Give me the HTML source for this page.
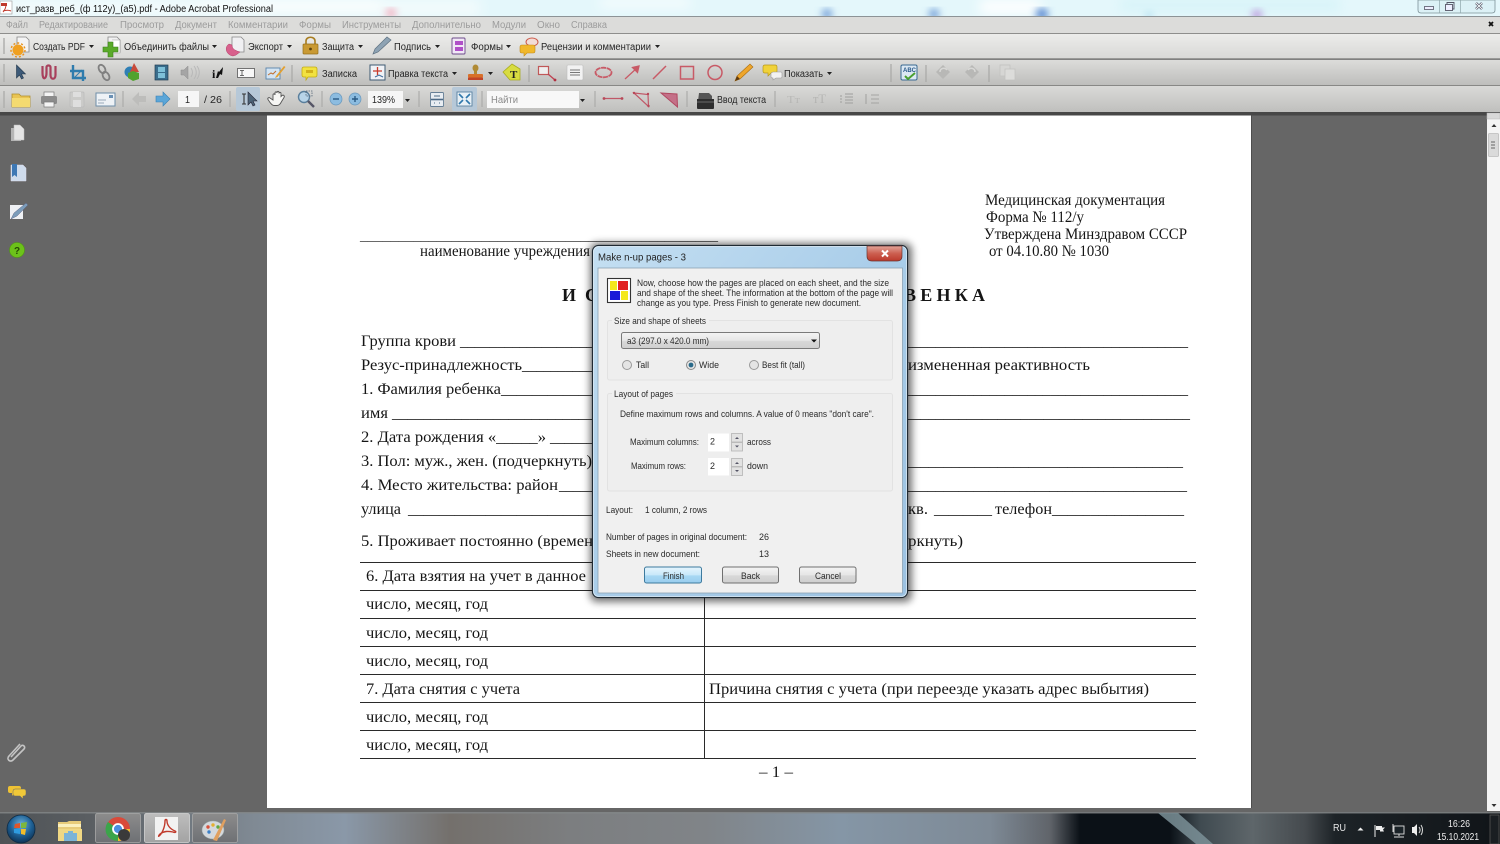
<!DOCTYPE html>
<html><head><meta charset="utf-8"><title>Adobe Acrobat</title>
<style>
html,body{margin:0;padding:0;width:1500px;height:844px;overflow:hidden;background:#666}
svg{display:block;filter:blur(.35px)}
text{font-family:"Liberation Sans","DejaVu Sans",sans-serif;font-size:10px;fill:#252525;white-space:pre}
.d text{font-family:"Liberation Serif","DejaVu Serif",serif;font-size:16px;fill:#151515}
.m text{fill:#9c9c9c}
.t text{font-size:9.5px;fill:#2a2a2a}
</style></head><body>
<svg width="1500" height="844" viewBox="0 0 1500 844" xmlns="http://www.w3.org/2000/svg">
<defs>
<linearGradient id="tb1" x1="0" y1="0" x2="0" y2="1"><stop offset="0" stop-color="#ececea"/><stop offset="1" stop-color="#d9d9d7"/></linearGradient>
<linearGradient id="tb2" x1="0" y1="0" x2="0" y2="1"><stop offset="0" stop-color="#dcdcda"/><stop offset="1" stop-color="#bebebc"/></linearGradient>
<linearGradient id="tb3" x1="0" y1="0" x2="0" y2="1"><stop offset="0" stop-color="#dadad8"/><stop offset="1" stop-color="#bfbfbd"/></linearGradient>
<linearGradient id="glass" x1="0" y1="0" x2="1" y2="1"><stop offset="0" stop-color="#c4dff2"/><stop offset=".5" stop-color="#a9cde9"/><stop offset="1" stop-color="#9cc2e2"/></linearGradient>
<linearGradient id="btn" x1="0" y1="0" x2="0" y2="1"><stop offset="0" stop-color="#f4f4f4"/><stop offset=".5" stop-color="#e6e6e6"/><stop offset=".55" stop-color="#d8d8d8"/><stop offset="1" stop-color="#cfcfcf"/></linearGradient>
<linearGradient id="btnb" x1="0" y1="0" x2="0" y2="1"><stop offset="0" stop-color="#e6f5fd"/><stop offset=".5" stop-color="#c8e8fa"/><stop offset=".55" stop-color="#a8d8f4"/><stop offset="1" stop-color="#98cdee"/></linearGradient>
<linearGradient id="close" x1="0" y1="0" x2="0" y2="1"><stop offset="0" stop-color="#e2a59a"/><stop offset=".5" stop-color="#cc5f50"/><stop offset="1" stop-color="#bb3a2c"/></linearGradient>
<linearGradient id="bar" x1="0" y1="0" x2="1" y2="0">
<stop offset="0" stop-color="#4f5356"/><stop offset=".06" stop-color="#5a5e62"/><stop offset=".17" stop-color="#808a94"/><stop offset=".23" stop-color="#8a98a8"/><stop offset=".3" stop-color="#74706c"/><stop offset=".38" stop-color="#7c7e80"/><stop offset=".47" stop-color="#808488"/><stop offset=".56" stop-color="#8596a6"/><stop offset=".66" stop-color="#7e8a96"/><stop offset=".7" stop-color="#60646a"/><stop offset=".72" stop-color="#0b1117"/><stop offset=".78" stop-color="#0b1117"/><stop offset=".8" stop-color="#3f4a50"/><stop offset=".835" stop-color="#5e666a"/><stop offset=".87" stop-color="#454a4e"/><stop offset=".89" stop-color="#1d2327"/><stop offset="1" stop-color="#101418"/></linearGradient>
<linearGradient id="acr" x1="0" y1="0" x2="0" y2="1"><stop offset="0" stop-color="#bdbdbd"/><stop offset="1" stop-color="#a3a3a3"/></linearGradient>
<linearGradient id="acr2" x1="0" y1="0" x2="0" y2="1"><stop offset="0" stop-color="#8c8c8c"/><stop offset="1" stop-color="#6e7074"/></linearGradient>
<radialGradient id="orb" cx=".5" cy=".35" r=".7"><stop offset="0" stop-color="#6fb2dc"/><stop offset=".55" stop-color="#1d5f93"/><stop offset="1" stop-color="#0c2b4a"/></radialGradient>
<filter id="b1"><feGaussianBlur stdDeviation="4"/></filter>
<filter id="b2"><feGaussianBlur stdDeviation="6"/></filter>
</defs>

<!-- background -->
<rect width="1500" height="844" fill="#666"/>

<!-- title bar -->
<rect width="1500" height="16" fill="#e4f7fb"/>
<g filter="url(#b2)">
<rect x="0" y="0" width="480" height="16" fill="#f3fbfc"/>
<rect x="200" y="0" width="180" height="8" fill="#fff"/>
<rect x="600" y="0" width="90" height="6" fill="#fff"/>
<rect x="980" y="0" width="60" height="14" fill="#fff"/>
<rect x="1120" y="0" width="220" height="10" fill="#d4f3f8"/>
</g>
<g filter="url(#b1)" fill-opacity=".95">
<circle cx="391" cy="13" r="5" fill="#f2a7b8"/>
<circle cx="827" cy="14" r="5" fill="#5e8ed2"/>
<circle cx="934" cy="14" r="5" fill="#5e8ed2"/>
<circle cx="1042" cy="14" r="6" fill="#4d80cc"/>
<circle cx="1257" cy="15" r="5" fill="#b58bd8"/>
<circle cx="1149" cy="16" r="3" fill="#8ccbe8"/>
</g>
<!-- pdf icon -->
<rect x="0" y="1" width="12" height="13" fill="#fff" stroke="#999" stroke-width=".6"/>
<path d="M1 3h6v3H1z" fill="#c0392b"/>
<path d="M3 12c2-2 3-5 3-8M3 11c3-1 6-1 8 0" stroke="#c0392b" fill="none" stroke-width="1"/>
<text x="16" y="12" textLength="257" lengthAdjust="spacingAndGlyphs" style="fill:#111">ист_разв_реб_(ф 112у)_(а5).pdf - Adobe Acrobat Professional</text>
<!-- window buttons -->
<path d="M1418 0v10q0 3 3 3h71q3 0 3-3V0z" fill="#dcf1f6" stroke="#7d9298" stroke-width=".8"/>
<path d="M1439.500 0v13M1460.500 0v13" stroke="#8ea5ab" stroke-width=".7"/>
<rect x="1424.500" y="6.500" width="9" height="3" fill="#eef" stroke="#556" stroke-width=".8"/>
<rect x="1445.500" y="4.500" width="7" height="6" fill="#eef" stroke="#556" stroke-width=".9"/><path d="M1447 4V2.500h7V9h-1.500" fill="none" stroke="#556" stroke-width=".9"/>
<path d="M1476 3l6 6M1482 3l-6 6" stroke="#556" stroke-width="2.400"/><path d="M1476 3l6 6M1482 3l-6 6" stroke="#f4f9fa" stroke-width="1"/>

<!-- menu bar -->
<rect y="16" width="1500" height="17" fill="#dcdcda"/>
<rect y="16" width="1500" height="1" fill="#8d9396"/>
<rect y="33" width="1500" height="1.500" fill="#8e8e8c"/>
<g class="m">
<text x="6" y="28" textLength="22" lengthAdjust="spacingAndGlyphs">Файл</text>
<text x="39" y="28" textLength="69" lengthAdjust="spacingAndGlyphs">Редактирование</text>
<text x="120" y="28" textLength="44" lengthAdjust="spacingAndGlyphs">Просмотр</text>
<text x="175" y="28" textLength="42" lengthAdjust="spacingAndGlyphs">Документ</text>
<text x="228" y="28" textLength="60" lengthAdjust="spacingAndGlyphs">Комментарии</text>
<text x="299" y="28" textLength="32" lengthAdjust="spacingAndGlyphs">Формы</text>
<text x="342" y="28" textLength="59" lengthAdjust="spacingAndGlyphs">Инструменты</text>
<text x="412" y="28" textLength="69" lengthAdjust="spacingAndGlyphs">Дополнительно</text>
<text x="492" y="28" textLength="34" lengthAdjust="spacingAndGlyphs">Модули</text>
<text x="537" y="28" textLength="23" lengthAdjust="spacingAndGlyphs">Окно</text>
<text x="571" y="28" textLength="36" lengthAdjust="spacingAndGlyphs">Справка</text>
</g>
<path d="M1489 22l4 4M1493 22l-4 4" stroke="#111" stroke-width="1.800"/>

<!-- toolbars -->
<rect y="34" width="1500" height="24" fill="url(#tb1)"/>
<rect y="58" width="1500" height="1.500" fill="#9a9a98"/>
<rect y="60" width="1500" height="25" fill="url(#tb2)"/>
<rect y="85" width="1500" height="1.500" fill="#888886"/>
<rect y="86" width="1500" height="26" fill="url(#tb3)"/>
<rect y="112" width="1500" height="3.500" fill="#474747"/>

<!-- Toolbar 1 -->
<g>
<path d="M4 38v16M4 64v18M4 91v17" stroke="#b0b0ae" stroke-width="1.500"/>
<path d="M17 37h9l3 3v12H17z" fill="#f4f4f4" stroke="#888" stroke-width=".8"/>
<circle cx="18" cy="50" r="5.500" fill="#f0a020"/><circle cx="18" cy="50" r="7" fill="none" stroke="#e89018" stroke-width="1.400" stroke-dasharray="2 2"/>
<text x="33" y="50" textLength="52" lengthAdjust="spacingAndGlyphs">Создать PDF</text>
<path d="M89 45h5l-2.500 3z" fill="#222"/>
<path d="M108 37h9l3 3v12h-12z" fill="#f2f2f2" stroke="#888" stroke-width=".8"/><path d="M112 40h8v13h-6" fill="#fff" stroke="#999" stroke-width=".6"/>
<path d="M108 42h5v5h5v5h-5v5h-5v-5h-5v-5h5z" fill="#5aaa2a" stroke="#3b7e1b" stroke-width=".6"/>
<text x="124" y="50" textLength="85" lengthAdjust="spacingAndGlyphs">Объединить файлы</text>
<path d="M212 45h5l-2.500 3z" fill="#222"/>
<path d="M232 37h9l3 3v12h-12z" fill="#f0f0f2" stroke="#888" stroke-width=".8"/>
<path d="M229 44c-5 3-3 11 4 12l3-1 4-3-3-1-2-1c-2-1-3-3-3-5z" fill="#d8608c" stroke="#b04068" stroke-width=".5"/>
<text x="248" y="50" textLength="35" lengthAdjust="spacingAndGlyphs">Экспорт</text>
<path d="M287 45h5l-2.500 3z" fill="#222"/>
<path d="M306 44v-3c0-5 9-5 9 0v3" fill="none" stroke="#a87d20" stroke-width="1.600"/>
<rect x="303" y="44" width="15" height="10" rx="1" fill="#c99a34" stroke="#95701c" stroke-width=".7"/><circle cx="310.500" cy="49" r="1.400" fill="#5c430e"/>
<text x="322" y="50" textLength="32" lengthAdjust="spacingAndGlyphs">Защита</text>
<path d="M358 45h5l-2.500 3z" fill="#222"/>
<path d="M373 54l2-5 12-12 4 3-13 12z" fill="#8ea3b4" stroke="#5f7282" stroke-width=".7"/>
<text x="394" y="50" textLength="37" lengthAdjust="spacingAndGlyphs">Подпись</text>
<path d="M435 45h5l-2.500 3z" fill="#222"/>
<rect x="452" y="38" width="13" height="16" rx="1" fill="#f1e8f6" stroke="#6c4a8a" stroke-width=".9"/><rect x="455" y="41" width="8" height="4" fill="#b050c8"/><rect x="455" y="47" width="8" height="4" fill="#b050c8"/>
<text x="471" y="50" textLength="32" lengthAdjust="spacingAndGlyphs">Формы</text>
<path d="M506 45h5l-2.500 3z" fill="#222"/>
<ellipse cx="532" cy="42" rx="6" ry="4" fill="#f2dcd6" stroke="#cc5a4a" stroke-width="1"/>
<path d="M522 45h11q2 0 2 2v4q0 2-2 2h-6l-3 3v-3h-2q-2 0-2-2v-4q0-2 2-2z" fill="#f0b82c" stroke="#c48a16" stroke-width=".6"/>
<text x="541" y="50" textLength="110" lengthAdjust="spacingAndGlyphs">Рецензии и комментарии</text>
<path d="M655 45h5l-2.500 3z" fill="#222"/>
</g>

<!-- Toolbar 2 -->
<g>
<path d="M16 65l0 13 3-3 2 4 2-1-2-4h4z" fill="#3d5a78" stroke="#22384c" stroke-width=".6" transform="translate(.5 0)"/>
<path d="M42.500 66v7c0 8 4 6 4 0v-6c0-2 4-2 4 0v8c0 5 5 5 5 0v-9" fill="none" stroke="#a8405c" stroke-width="2.200"/>
<path d="M70 71h13v10M73 65v13h13" fill="none" stroke="#2f7cad" stroke-width="2.400"/><path d="M74 78l8-8" stroke="#2f7cad"/>
<ellipse cx="102" cy="69" rx="3" ry="4.500" fill="none" stroke="#808080" stroke-width="1.800" transform="rotate(-30 102 69)"/><ellipse cx="106" cy="76" rx="3" ry="4.500" fill="none" stroke="#808080" stroke-width="1.800" transform="rotate(-30 106 76)"/>
<circle cx="130" cy="72" r="5.500" fill="#2f7fb5"/><path d="M134 63l5 9h-9z" fill="#c84a3a"/><path d="M133 71l6 2v6l-6 2-5-3v-5z" fill="#52a22e"/>
<rect x="155" y="65" width="13" height="15" fill="#3a6d8c" stroke="#223e52" stroke-width=".7"/><rect x="158" y="67" width="7" height="5" fill="#7ec0d8"/><rect x="158" y="73" width="7" height="5" fill="#7ec0d8"/>
<path d="M181 70h3l4-4v13l-4-4h-3z" fill="#a5a5a5" stroke="#8d8d8d" stroke-width=".5"/><path d="M191 68c2 3 2 6 0 9M194 66c3 4 3 9 0 13M197 66c3 4 3 9 0 13" fill="none" stroke="#b8b8b8" stroke-width="1"/>
<text x="212" y="78" style="font-size:12px;font-weight:bold;fill:#111;font-family:'Liberation Serif',serif">i</text>
<path d="M216 78l2-7 1 1 4-5-1 8-2-1-2 4z" fill="#111"/>
<rect x="237.500" y="68.500" width="17" height="9" fill="#f7f7f7" stroke="#666" stroke-width=".9"/><path d="M240 70.500h4M242 70.500v5M240 75.500h4" stroke="#444" stroke-width=".8"/>
<rect x="266" y="68" width="14" height="11" fill="#d4e4f2" stroke="#5a84aa" stroke-width=".9"/><path d="M268 75l3-2 2 1 3-3" stroke="#c07030" fill="none"/><path d="M276 76l8-10 1.500 1-8 10-2.500 1z" fill="#e2a030"/>
<path d="M292 65v17M529 65v17M891 64v18M926 65v17M989 65v17" stroke="#a8a8a6" stroke-width="1.200"/>
<path d="M304 67h11q2 0 2 2v6q0 2-2 2h-7l-2 3v-3h-2q-2 0-2-2v-6q0-2 2-2z" fill="#f2e240" stroke="#c2ac14" stroke-width=".8"/><rect x="306" y="70" width="7" height="3" fill="#c8a010" opacity=".75"/>
<text x="322" y="77" textLength="35" lengthAdjust="spacingAndGlyphs">Записка</text>
<rect x="370" y="65" width="15" height="15" fill="#f0f2f6" stroke="#3e5a72" stroke-width="1"/><path d="M373 71h9M377.500 67v8" stroke="#c83a2a" stroke-width="1.300"/><path d="M375 77l4-2 4 2" stroke="#3e6a9a" fill="none"/>
<text x="388" y="77" textLength="60" lengthAdjust="spacingAndGlyphs">Правка текста</text>
<path d="M452 72h5l-2.500 3z" fill="#222"/>
<ellipse cx="475.500" cy="68" rx="3" ry="3.500" fill="#b08a34"/><path d="M474 71h3v3h-3z" fill="#b08a34"/><rect x="468" y="74" width="15" height="3.500" rx="1" fill="#d8702a"/><rect x="468" y="77.500" width="15" height="2.500" fill="#c04428"/>
<path d="M488 72h5l-2.500 3z" fill="#222"/>
<path d="M503 72l9-8 8 5v11h-10z" fill="#d8dc40" stroke="#a8ac20" stroke-width=".8"/><text x="510" y="78" style="font-size:11px;font-weight:bold;fill:#222;font-family:'Liberation Serif',serif">T</text>
<rect x="538.500" y="66.500" width="10" height="8" fill="#eee" stroke="#c05858" stroke-width="1.200"/><path d="M548 74l7 6" stroke="#c04050" stroke-width="1.300"/><circle cx="555" cy="80" r="1.400" fill="#b03040"/>
<rect x="567" y="65" width="16" height="15" rx="1" fill="#f2f2f2" stroke="#bbb" stroke-width=".6"/><path d="M570 70h10M570 72.500h10M570 75h10" stroke="#777" stroke-width=".9"/>
<ellipse cx="603.500" cy="72.500" rx="8" ry="4.800" fill="none" stroke="#c85a66" stroke-width="1.800" stroke-dasharray="5 .6"/>
<path d="M625 79l13-12M639 66l-1.500 6.500-5-5z" fill="#c85a66" stroke="#c85a66" stroke-width="1.300"/>
<path d="M653 79l13-13" stroke="#c85a66" stroke-width="1.500"/>
<rect x="680.500" y="66.500" width="13" height="12.500" fill="none" stroke="#c85a66" stroke-width="1.500"/>
<circle cx="715" cy="72.500" r="7" fill="none" stroke="#c85a66" stroke-width="1.500"/>
<path d="M735 81l2-5 13-12 3 3-13 12z" fill="#eea62c" stroke="#a86c10" stroke-width=".6"/><path d="M735 81l2-5 3 3z" fill="#5e3a10"/>
<path d="M765 65h10q2 0 2 2v4q0 2-2 2h-4l-3 3v-3h-3q-2 0-2-2v-4q0-2 2-2z" fill="#f0d23a" stroke="#b8981a" stroke-width=".7"/>
<path d="M773 72h8q1 0 1 1v4q0 1-1 1h-5l-3 2v-2q-2 0-2-1v-4z" fill="#f2f2f2" stroke="#999" stroke-width=".6"/>
<text x="784" y="77" textLength="39" lengthAdjust="spacingAndGlyphs">Показать</text>
<path d="M827 72h5l-2.500 3z" fill="#222"/>
<rect x="901" y="65" width="16" height="15" rx="1.500" fill="#dbe8f3" stroke="#3a6a92" stroke-width="1"/><text x="903" y="72" style="font-size:6px;font-weight:bold;fill:#2a5a8a">ABC</text><path d="M905 76l3 3 7-6" stroke="#4aa030" stroke-width="2" fill="none"/>
<path d="M943 65l7 7-7 7-7-7z" fill="#b8b8b6"/><path d="M940 72c0-4 5-5 7-2" fill="none" stroke="#d8d8d6" stroke-width="1.500"/>
<path d="M972 65l7 7-7 7-7-7z" fill="#b8b8b6"/><path d="M975 72c0-4-5-5-7-2" fill="none" stroke="#d8d8d6" stroke-width="1.500"/>
<rect x="1000" y="65" width="10" height="11" fill="#d6d6d4" stroke="#c2c2c0" stroke-width=".8"/><rect x="1005" y="69" width="10" height="11" fill="#dcdcda" stroke="#c2c2c0" stroke-width=".8"/>
</g>

<!-- Toolbar 3 -->
<g>
<path d="M12 94h7l2 2h9v11H12z" fill="#e9c453" stroke="#b08f2c" stroke-width=".8"/><path d="M12 98h18v9H12z" fill="#f4da70"/>
<rect x="44" y="92" width="10" height="5" fill="#f4f4f4" stroke="#777" stroke-width=".7"/><rect x="41" y="96" width="16" height="8" rx="1.500" fill="#8b8b8b"/><rect x="44" y="102" width="10" height="5" fill="#f4f4f4" stroke="#777" stroke-width=".7"/>
<rect x="70" y="92" width="14" height="15" rx="1" fill="#cbcbc9" stroke="#bababa" stroke-width=".7"/><rect x="73" y="92" width="8" height="5" fill="#dedede"/><rect x="73" y="100" width="8" height="7" fill="#dedede"/>
<rect x="96" y="93" width="19" height="13" fill="#eef2f6" stroke="#6f8ea8" stroke-width="1"/><path d="M98 100h8M98 103h6" stroke="#99aabb"/><rect x="109" y="95" width="4" height="3" fill="#6a90b4"/>
<path d="M123 91v16M230 91v16M322 91v16M419 91v16M482 91v16M595 91v16M687 91v16M775 91v16" stroke="#acacaa" stroke-width="1.200"/>
<path d="M132 99l7-7v4h7v6h-7v4z" fill="#bdbdbb"/>
<path d="M170 99l-7-7v4h-7v6h7v4z" fill="#5ba6d8" stroke="#3880b4" stroke-width=".6"/>
<rect x="178" y="91" width="21" height="16" fill="#f6f6f6"/>
<text x="185" y="103" textLength="5" lengthAdjust="spacingAndGlyphs">1</text>
<text x="204" y="103" textLength="18" lengthAdjust="spacingAndGlyphs">/ 26</text>
<rect x="236" y="87" width="24" height="24" rx="2" fill="#b6c8d8"/>
<path d="M242 94h4M244 94v10M242 104h4" stroke="#333" stroke-width="1.100"/>
<path d="M248 92v13l3-3 2 4 2-1-2-4h4z" fill="#4d6478" stroke="#223" stroke-width=".6"/>
<g transform="translate(3 0)"><path d="M270 100v-5c0-1.500 2-1.500 2 0v-2c0-1.500 2-1.500 2 0v-.5c0-1.500 2-1.500 2 0v1c0-1.500 2-1.500 2 0v3l1-1c1.500-1 3 .5 2 2l-3 5c-1 2-2 3-4 3h-3c-2 0-3-2-4-3l-2-3c-.8-1.500 1-2.500 2-1.500z" fill="#f6f6f4" stroke="#555" stroke-width=".9"/></g>
<circle cx="304" cy="97" r="5.500" fill="#b8d4e8" stroke="#5a7f9c" stroke-width="1.400"/><path d="M308 101l6 6" stroke="#556" stroke-width="2.400"/><rect x="306" y="91" width="6" height="5" fill="none" stroke="#567" stroke-width=".8" stroke-dasharray="1.500 1"/>
<circle cx="336" cy="99" r="6" fill="#8cbce0" stroke="#6a98bc" stroke-width=".7"/><path d="M333 99h6" stroke="#2a5a84" stroke-width="1.400"/>
<circle cx="355" cy="99" r="6" fill="#8cbce0" stroke="#6a98bc" stroke-width=".7"/><path d="M352 99h6M355 96v6" stroke="#2a5a84" stroke-width="1.400"/>
<rect x="368" y="91" width="35" height="17" fill="#f6f6f6"/>
<text x="372" y="103" textLength="23" lengthAdjust="spacingAndGlyphs">139%</text>
<path d="M405 99h5l-2.500 3z" fill="#222"/>
<rect x="430.500" y="92.500" width="13" height="14" rx="1" fill="#e8edf2" stroke="#667f96" stroke-width=".9"/><path d="M431 99.500h12" stroke="#4d6a86" stroke-width="1.600"/><path d="M434 103h1M439 103h1M434 96h6" stroke="#4d6a86"/>
<rect x="452" y="87" width="25" height="24" rx="2" fill="#b6c8d8"/>
<rect x="457" y="92" width="15" height="14" fill="#e8f0f6" stroke="#5a80a0" stroke-width=".9"/><path d="M459 94l4 4M470 94l-4 4M459 104l4-4M470 104l-4-4" stroke="#2f78ac" stroke-width="1.600"/>
<rect x="487" y="91" width="92" height="17" fill="#f8f8f8"/>
<text x="491" y="103" textLength="27" lengthAdjust="spacingAndGlyphs" style="fill:#8a8a8a">Найти</text>
<path d="M580 99h5l-2.500 3z" fill="#222"/>
<path d="M604 98.500h19" stroke="#c05868" stroke-width="1.200"/><circle cx="604" cy="98.500" r="1.400" fill="#b84858"/><circle cx="622" cy="98.500" r="1.400" fill="#b84858"/>
<path d="M634 93l14 1.500 .5 12z" fill="none" stroke="#c05868" stroke-width="1.200"/><circle cx="634" cy="93" r="1.200" fill="#b84858"/><circle cx="648" cy="94" r="1.200" fill="#b84858"/><circle cx="648.500" cy="106" r="1.200" fill="#b84858"/>
<path d="M661 93l16 1 .5 13z" fill="#c47088" stroke="#b04860" stroke-width="1"/>
<path d="M699 93h10l3 3v5h-14z" fill="#555"/><path d="M697 99h17v9q0 1-1 1h-15q-1 0-1-1z" fill="#2e2e2e"/><path d="M697 102h17" stroke="#6a6a6a"/>
<text x="717" y="103" textLength="49" lengthAdjust="spacingAndGlyphs">Ввод текста</text>
<g style="opacity:.55">
<text x="787" y="103" style="font-family:'Liberation Serif',serif;font-size:11px;fill:#a8a8a6" textLength="13" lengthAdjust="spacingAndGlyphs">Tт</text>
<text x="813" y="103" style="font-family:'Liberation Serif',serif;font-size:13px;fill:#a0a09e" textLength="13" lengthAdjust="spacingAndGlyphs">тT</text>
</g>
<path d="M840 96h2M840 99h2M840 102h2M845 94h8M845 97h8M845 100h8M845 103h8" stroke="#a8a8a6" stroke-width="1.200"/>
<path d="M866 94v10M871 95h8M871 99h8M871 103h8" stroke="#a4a4a2" stroke-width="1.100"/>
</g>

<!-- left pane -->
<g>
<rect x="11" y="128" width="10" height="13" fill="#b4b4b4"/><path d="M14 125h6l4 4v11H14z" fill="#e4e4e4" stroke="#bbb" stroke-width=".5"/>
<path d="M11 165h12l3 3v13H11z" fill="#cfdcec" stroke="#dde" stroke-width=".5"/><path d="M12 164h5v13l-2.500-2-2.500 2z" fill="#3e78b4"/>
<rect x="10" y="205" width="13" height="14" fill="#eef0f4"/><path d="M11 219l3-6 12-10 2 2-11 11z" fill="#7b9cba" stroke="#557" stroke-width=".4"/>
<circle cx="17" cy="250" r="7.500" fill="#6cc21a" stroke="#4f9a10" stroke-width=".6"/><text x="14" y="254" style="font-size:10px;font-weight:bold;fill:#254a04">?</text>
<path d="M12 758l10-11c2-2 5 1 3 3l-11 11c-3 3-7-1-4-4l11-12" fill="none" stroke="#c4c4c4" stroke-width="1.600" transform="translate(-1 -1)"/>
<path d="M10 786h9q2 0 2 2v3q0 2-2 2h-5l-2 3v-3h-2q-2 0-2-2v-3q0-2 2-2z" fill="#eec234"/>
<path d="M15 789h9q2 0 2 2v3q0 2-2 2h-1v3l-3-3h-5q-2 0-2-2v-3q0-2 2-2z" fill="#f0c838" stroke="#666" stroke-width=".5"/>
</g>

<!-- page -->
<rect x="267" y="115.500" width="984" height="692.500" fill="#fff"/>
<rect x="1251" y="115" width="1" height="693" fill="#4e4e4e"/>
<rect x="267" y="808" width="985" height="1" fill="#d0d0d0"/>

<!-- page text -->
<g class="d">
<text x="985" y="205" textLength="180" lengthAdjust="spacingAndGlyphs">Медицинская документация</text>
<text x="986" y="222" textLength="98" lengthAdjust="spacingAndGlyphs">Форма № 112/у</text>
<text x="984" y="239" textLength="203" lengthAdjust="spacingAndGlyphs">Утверждена Минздравом СССР</text>
<text x="989" y="256" textLength="120" lengthAdjust="spacingAndGlyphs">от 04.10.80 № 1030</text>

<text x="360" y="240" textLength="358" lengthAdjust="spacingAndGlyphs" style="fill:#444">_______________________________________________</text>
<text x="420" y="256" textLength="170" lengthAdjust="spacingAndGlyphs">наименование учреждения</text>

<text x="562" y="301" style="font-weight:bold;font-size:18px" textLength="36" lengthAdjust="spacing">И С</text>
<text x="904" y="301" style="font-weight:bold;font-size:18px" textLength="81" lengthAdjust="spacing">В Е Н К А</text>

<text x="361" y="346" textLength="95" lengthAdjust="spacingAndGlyphs">Группа крови</text>
<text x="460" y="346" textLength="134" lengthAdjust="spacingAndGlyphs">__________________</text>
<text x="905" y="346" textLength="283" lengthAdjust="spacingAndGlyphs">_____________________________________</text>

<text x="361" y="370" textLength="161" lengthAdjust="spacingAndGlyphs">Резус-принадлежность</text>
<text x="522" y="370" textLength="72" lengthAdjust="spacingAndGlyphs">__________</text>
<text x="908" y="370" textLength="182" lengthAdjust="spacingAndGlyphs">измененная реактивность</text>

<text x="361" y="394" textLength="140" lengthAdjust="spacingAndGlyphs">1. Фамилия ребенка</text>
<text x="501" y="394" textLength="93" lengthAdjust="spacingAndGlyphs">____________</text>
<text x="905" y="394" textLength="283" lengthAdjust="spacingAndGlyphs">_____________________________________</text>

<text x="361" y="418" textLength="27" lengthAdjust="spacingAndGlyphs">имя</text>
<text x="392" y="418" textLength="202" lengthAdjust="spacingAndGlyphs">__________________________</text>
<text x="905" y="418" textLength="285" lengthAdjust="spacingAndGlyphs">_____________________________________</text>

<text x="361" y="442" textLength="185" lengthAdjust="spacingAndGlyphs">2. Дата рождения «_____»</text>
<text x="550" y="442" textLength="44" lengthAdjust="spacingAndGlyphs">______</text>

<text x="361" y="466" textLength="231" lengthAdjust="spacingAndGlyphs">3. Пол: муж., жен. (подчеркнуть)</text>
<text x="905" y="466" textLength="278" lengthAdjust="spacingAndGlyphs">____________________________________</text>

<text x="361" y="490" textLength="197" lengthAdjust="spacingAndGlyphs">4. Место жительства: район</text>
<text x="559" y="490" textLength="35" lengthAdjust="spacingAndGlyphs">_____</text>
<text x="905" y="490" textLength="282" lengthAdjust="spacingAndGlyphs">_____________________________________</text>

<text x="361" y="514" textLength="40" lengthAdjust="spacingAndGlyphs">улица</text>
<text x="408" y="514" textLength="186" lengthAdjust="spacingAndGlyphs">________________________</text>
<text x="908" y="514" textLength="20" lengthAdjust="spacingAndGlyphs">кв.</text>
<text x="934" y="514" textLength="58" lengthAdjust="spacingAndGlyphs">________</text>
<text x="995" y="514" textLength="57" lengthAdjust="spacingAndGlyphs">телефон</text>
<text x="1052" y="514" textLength="132" lengthAdjust="spacingAndGlyphs">_________________</text>

<text x="361" y="546" textLength="232" lengthAdjust="spacingAndGlyphs">5. Проживает постоянно (времен</text>
<text x="908" y="546" textLength="55" lengthAdjust="spacingAndGlyphs">ркнуть)</text>

<text x="366" y="581" textLength="220" lengthAdjust="spacingAndGlyphs">6. Дата взятия на учет в данное</text>
<text x="366" y="609" textLength="122" lengthAdjust="spacingAndGlyphs">число, месяц, год</text>
<text x="366" y="638" textLength="122" lengthAdjust="spacingAndGlyphs">число, месяц, год</text>
<text x="366" y="666" textLength="122" lengthAdjust="spacingAndGlyphs">число, месяц, год</text>
<text x="366" y="694" textLength="154" lengthAdjust="spacingAndGlyphs">7. Дата снятия с учета</text>
<text x="709" y="694" textLength="440" lengthAdjust="spacingAndGlyphs">Причина снятия с учета (при переезде указать адрес выбытия)</text>
<text x="366" y="722" textLength="122" lengthAdjust="spacingAndGlyphs">число, месяц, год</text>
<text x="366" y="750" textLength="122" lengthAdjust="spacingAndGlyphs">число, месяц, год</text>
<text x="759" y="777" textLength="34" lengthAdjust="spacingAndGlyphs">– 1 –</text>
</g>
<path d="M360 562.500h836M360 590.500h836M360 618.500h836M360 646.500h836M360 674.500h836M360 702.500h836M360 730.500h836M360 758.500h836M704.500 590v168" stroke="#2a2a2a" stroke-width="1" fill="none"/>

<!-- scrollbar -->
<rect x="1487" y="113" width="13" height="698" fill="#f4f4f4"/>
<rect x="1487" y="113" width="13" height="6" fill="#d8d8d8" stroke="#bbb" stroke-width=".5"/>
<path d="M1491.500 127h5l-2.500-3z" fill="#333"/>
<rect x="1488.500" y="133.500" width="10" height="23" rx="1" fill="#dadada" stroke="#bcbcbc" stroke-width=".8"/>
<path d="M1491 142h4M1491 145h4M1491 148h4" stroke="#666"/>
<path d="M1491.500 804h5l-2.500 3z" fill="#333"/>

<!-- taskbar -->
<rect y="808" width="1487" height="4" fill="#666"/>
<rect y="812.500" width="1500" height="31.500" fill="url(#bar)"/>
<rect y="812" width="1500" height="1.500" fill="#85888a" opacity=".8"/>
<path d="M1160 813l38 31h17l-35-31z" fill="#7b9098" opacity=".85" transform="translate(-2 0)"/>
<circle cx="21" cy="829" r="14" fill="url(#orb)" stroke="#0d2a44" stroke-width=".8"/>
<path d="M15 824l5-1v5h-6z" fill="#e0562a"/><path d="M21 823l6-1-1 6h-5z" fill="#7eb73c"/><path d="M14 829h6v5l-6-1z" fill="#2f9ce0"/><path d="M21 829h5l-1 6-4-1z" fill="#f2bd2a"/>
<path d="M58 822h9l2-1h12v20H58z" fill="#e8cc7a"/><path d="M58 824h23v3H58z" fill="#fbf0be"/><path d="M58 829h24v12H58z" fill="#f0d884"/><rect x="64" y="833" width="13" height="8" fill="#7cb4d8"/><rect x="68" y="831" width="5" height="3" fill="#7cb4d8"/>
<rect x="95.500" y="813.500" width="45" height="29" rx="2" fill="url(#acr2)" stroke="#a8a8a8" stroke-width=".8"/>
<rect x="144.500" y="813.500" width="45" height="29" rx="2" fill="url(#acr)" stroke="#d4d4d4" stroke-width=".8"/>
<rect x="192.500" y="813.500" width="45" height="29" rx="2" fill="url(#acr2)" stroke="#a8a8a8" stroke-width=".8"/>
<circle cx="118" cy="829" r="12" fill="#d94a3a"/>
<path d="M118 829L107 835a12 12 0 0 0 11 6z" fill="#3aa54a"/><path d="M118 829l-11 6a12 12 0 0 1 1-13z" fill="#3aa54a"/>
<path d="M118 829h12a12 12 0 0 1-12 12z" fill="#f1c232"/>
<circle cx="118" cy="829" r="5" fill="#4c8fe0" stroke="#fff" stroke-width="1.800"/>
<circle cx="124" cy="835" r="6" fill="#3a3a3a"/>
<rect x="155" y="817" width="23" height="23" fill="#f2f2f2"/>
<path d="M159 836c3-2 6-9 6-15 0-2 2-2 2 0 0 4 3 8 8 10 2 1 0 2-2 1-5-1-9-1-13 2-1 1-2 3-1 2z" fill="none" stroke="#c0392b" stroke-width="1.400"/>
<ellipse cx="213" cy="830" rx="11" ry="9" fill="#d4d8dc" stroke="#9aa" stroke-width=".5"/>
<circle cx="208" cy="827" r="1.700" fill="#d8503a"/><circle cx="213" cy="825" r="1.700" fill="#e4b030"/><circle cx="218" cy="827" r="1.700" fill="#60a840"/><circle cx="209" cy="832" r="1.700" fill="#3a80c8"/>
<path d="M213 840l11-21 2 1-9 21z" fill="#e0a060"/>

<text x="1333" y="831" textLength="13" lengthAdjust="spacingAndGlyphs" style="fill:#e8e8e8">RU</text>
<path d="M1357.500 830.500h6l-3-3z" fill="#eee"/>
<path d="M1375 825v12" stroke="#eee" stroke-width="1"/><path d="M1376 826h6v1.500h3l-2 2 1 2h-4v-1.500h-4z" fill="#eee"/>
<rect x="1394" y="826" width="10" height="8" fill="#1a2227" stroke="#ddd" stroke-width=".9"/><path d="M1399 834v2M1394 837h10M1393 824v8" stroke="#ddd" stroke-width="1"/>
<path d="M1412 827h2l3-3v12l-3-3h-2z" fill="#eee"/><path d="M1419 827c1.500 2 1.500 4 0 6M1421 825c2 3 2 7 0 10" fill="none" stroke="#ddd"/>
<text x="1448" y="827" textLength="22" lengthAdjust="spacingAndGlyphs" style="fill:#eee">16:26</text>
<text x="1437" y="840" textLength="42" lengthAdjust="spacingAndGlyphs" style="fill:#eee">15.10.2021</text>
<rect x="1490" y="815" width="9" height="29" fill="#1a1e22" stroke="#555" stroke-width=".8"/>

<!-- dialog shadow -->
<rect x="590" y="243" width="322" height="359" rx="7" fill="#000" opacity=".55" filter="url(#b1)"/>
<!-- dialog -->
<rect x="592.500" y="245.500" width="315" height="352" rx="6" fill="url(#glass)" stroke="#1f2a33" stroke-width="1.200"/>
<rect x="593.500" y="246.500" width="313" height="350" rx="5" fill="none" stroke="#e6f1f9" stroke-opacity=".7"/>
<rect x="598" y="268" width="304.500" height="325" fill="#f0f0f0" stroke="#8da3b5" stroke-width=".8"/>
<path d="M867 246h35v10q0 5-5 5h-25q-5 0-5-5z" fill="url(#close)" stroke="#6b3530" stroke-width=".7"/>
<path d="M882 250.500l6 6M888 250.500l-6 6" stroke="#fff" stroke-width="2"/>
<text x="598" y="260.500" textLength="88" lengthAdjust="spacingAndGlyphs" style="font-size:10px;fill:#222">Make n-up pages - 3</text>

<rect x="607.500" y="278.500" width="23" height="24" fill="#fff" stroke="#333" stroke-width="1.100"/>
<rect x="610" y="281" width="7" height="9" fill="#f4e81c"/><rect x="618" y="281" width="10" height="9" fill="#e02020"/><rect x="610" y="291" width="10" height="9" fill="#1a1ad8"/><rect x="621" y="291" width="7" height="9" fill="#f4e81c"/>

<g class="t">
<text x="637" y="286" textLength="252" lengthAdjust="spacingAndGlyphs">Now, choose how the pages are placed on each sheet, and the size</text>
<text x="637" y="296" textLength="256" lengthAdjust="spacingAndGlyphs">and shape of the sheet. The information at the bottom of the page will</text>
<text x="637" y="306" textLength="224" lengthAdjust="spacingAndGlyphs">change as you type. Press Finish to generate new document.</text>

<rect x="607.500" y="320.500" width="285" height="59.500" rx="2" fill="#eeeeee" stroke="#e2e2e2"/>
<rect x="612" y="318" width="97" height="6" fill="#f0f0f0"/>
<text x="614" y="324" textLength="92" lengthAdjust="spacingAndGlyphs">Size and shape of sheets</text>
<rect x="621.500" y="332.500" width="198" height="16" rx="2" fill="url(#btn)" stroke="#7a7a7a"/>
<text x="627" y="344" textLength="82" lengthAdjust="spacingAndGlyphs">a3 (297.0 x 420.0 mm)</text>
<path d="M811 339.500h6l-3 3z" fill="#111"/>

<circle cx="627" cy="365" r="4.500" fill="#e4e4e4" stroke="#999"/>
<text x="636" y="368" textLength="13" lengthAdjust="spacingAndGlyphs">Tall</text>
<circle cx="691" cy="365" r="4.500" fill="#e4e4e4" stroke="#888"/><circle cx="691" cy="365" r="2.400" fill="#2a6a8a"/>
<text x="699" y="368" textLength="20" lengthAdjust="spacingAndGlyphs">Wide</text>
<circle cx="754" cy="365" r="4.500" fill="#e4e4e4" stroke="#999"/>
<text x="762" y="368" textLength="43" lengthAdjust="spacingAndGlyphs">Best fit (tall)</text>

<rect x="607.500" y="393.500" width="285" height="97.500" rx="2" fill="#eeeeee" stroke="#e2e2e2"/>
<rect x="612" y="391" width="64" height="6" fill="#f0f0f0"/>
<text x="614" y="397" textLength="59" lengthAdjust="spacingAndGlyphs">Layout of pages</text>
<text x="620" y="417" textLength="254" lengthAdjust="spacingAndGlyphs">Define maximum rows and columns. A value of 0 means "don't care".</text>

<text x="630" y="445" textLength="69" lengthAdjust="spacingAndGlyphs">Maximum columns:</text>
<rect x="708" y="433.500" width="21" height="18" fill="#fff"/>
<text x="710" y="444.500" textLength="5" lengthAdjust="spacingAndGlyphs">2</text>
<rect x="731.500" y="433.500" width="11" height="8.500" fill="#e2e2e2" stroke="#b4b4b4" stroke-width=".8"/>
<rect x="731.500" y="442.500" width="11" height="8.500" fill="#e2e2e2" stroke="#b4b4b4" stroke-width=".8"/>
<path d="M735 439h4l-2-2zM735 445.500h4l-2 2z" fill="#556"/>
<text x="747" y="445" textLength="24" lengthAdjust="spacingAndGlyphs">across</text>

<text x="631" y="469" textLength="55" lengthAdjust="spacingAndGlyphs">Maximum rows:</text>
<rect x="708" y="458" width="21" height="17.500" fill="#fff"/>
<text x="710" y="469" textLength="5" lengthAdjust="spacingAndGlyphs">2</text>
<rect x="731.500" y="458.500" width="11" height="8" fill="#e2e2e2" stroke="#b4b4b4" stroke-width=".8"/>
<rect x="731.500" y="467" width="11" height="8.500" fill="#e2e2e2" stroke="#b4b4b4" stroke-width=".8"/>
<path d="M735 464h4l-2-2zM735 470h4l-2 2z" fill="#556"/>
<text x="747" y="469" textLength="21" lengthAdjust="spacingAndGlyphs">down</text>

<text x="606" y="513" textLength="27" lengthAdjust="spacingAndGlyphs">Layout:</text>
<text x="645" y="513" textLength="62" lengthAdjust="spacingAndGlyphs">1 column, 2 rows</text>
<text x="606" y="540" textLength="141" lengthAdjust="spacingAndGlyphs">Number of pages in original document:</text>
<text x="759" y="540" textLength="10" lengthAdjust="spacingAndGlyphs">26</text>
<text x="606" y="557" textLength="94" lengthAdjust="spacingAndGlyphs">Sheets in new document:</text>
<text x="759" y="557" textLength="10" lengthAdjust="spacingAndGlyphs">13</text>

<rect x="644.500" y="567" width="57" height="16" rx="2" fill="url(#btnb)" stroke="#3d7a9e"/>
<text x="663" y="579" textLength="21" lengthAdjust="spacingAndGlyphs">Finish</text>
<rect x="722.500" y="567" width="56" height="16" rx="2" fill="url(#btn)" stroke="#707070"/>
<text x="741" y="579" textLength="19" lengthAdjust="spacingAndGlyphs">Back</text>
<rect x="799.500" y="567" width="56.500" height="16" rx="2" fill="url(#btn)" stroke="#707070"/>
<text x="815" y="579" textLength="26" lengthAdjust="spacingAndGlyphs">Cancel</text>
</g>
</svg>
</body></html>
